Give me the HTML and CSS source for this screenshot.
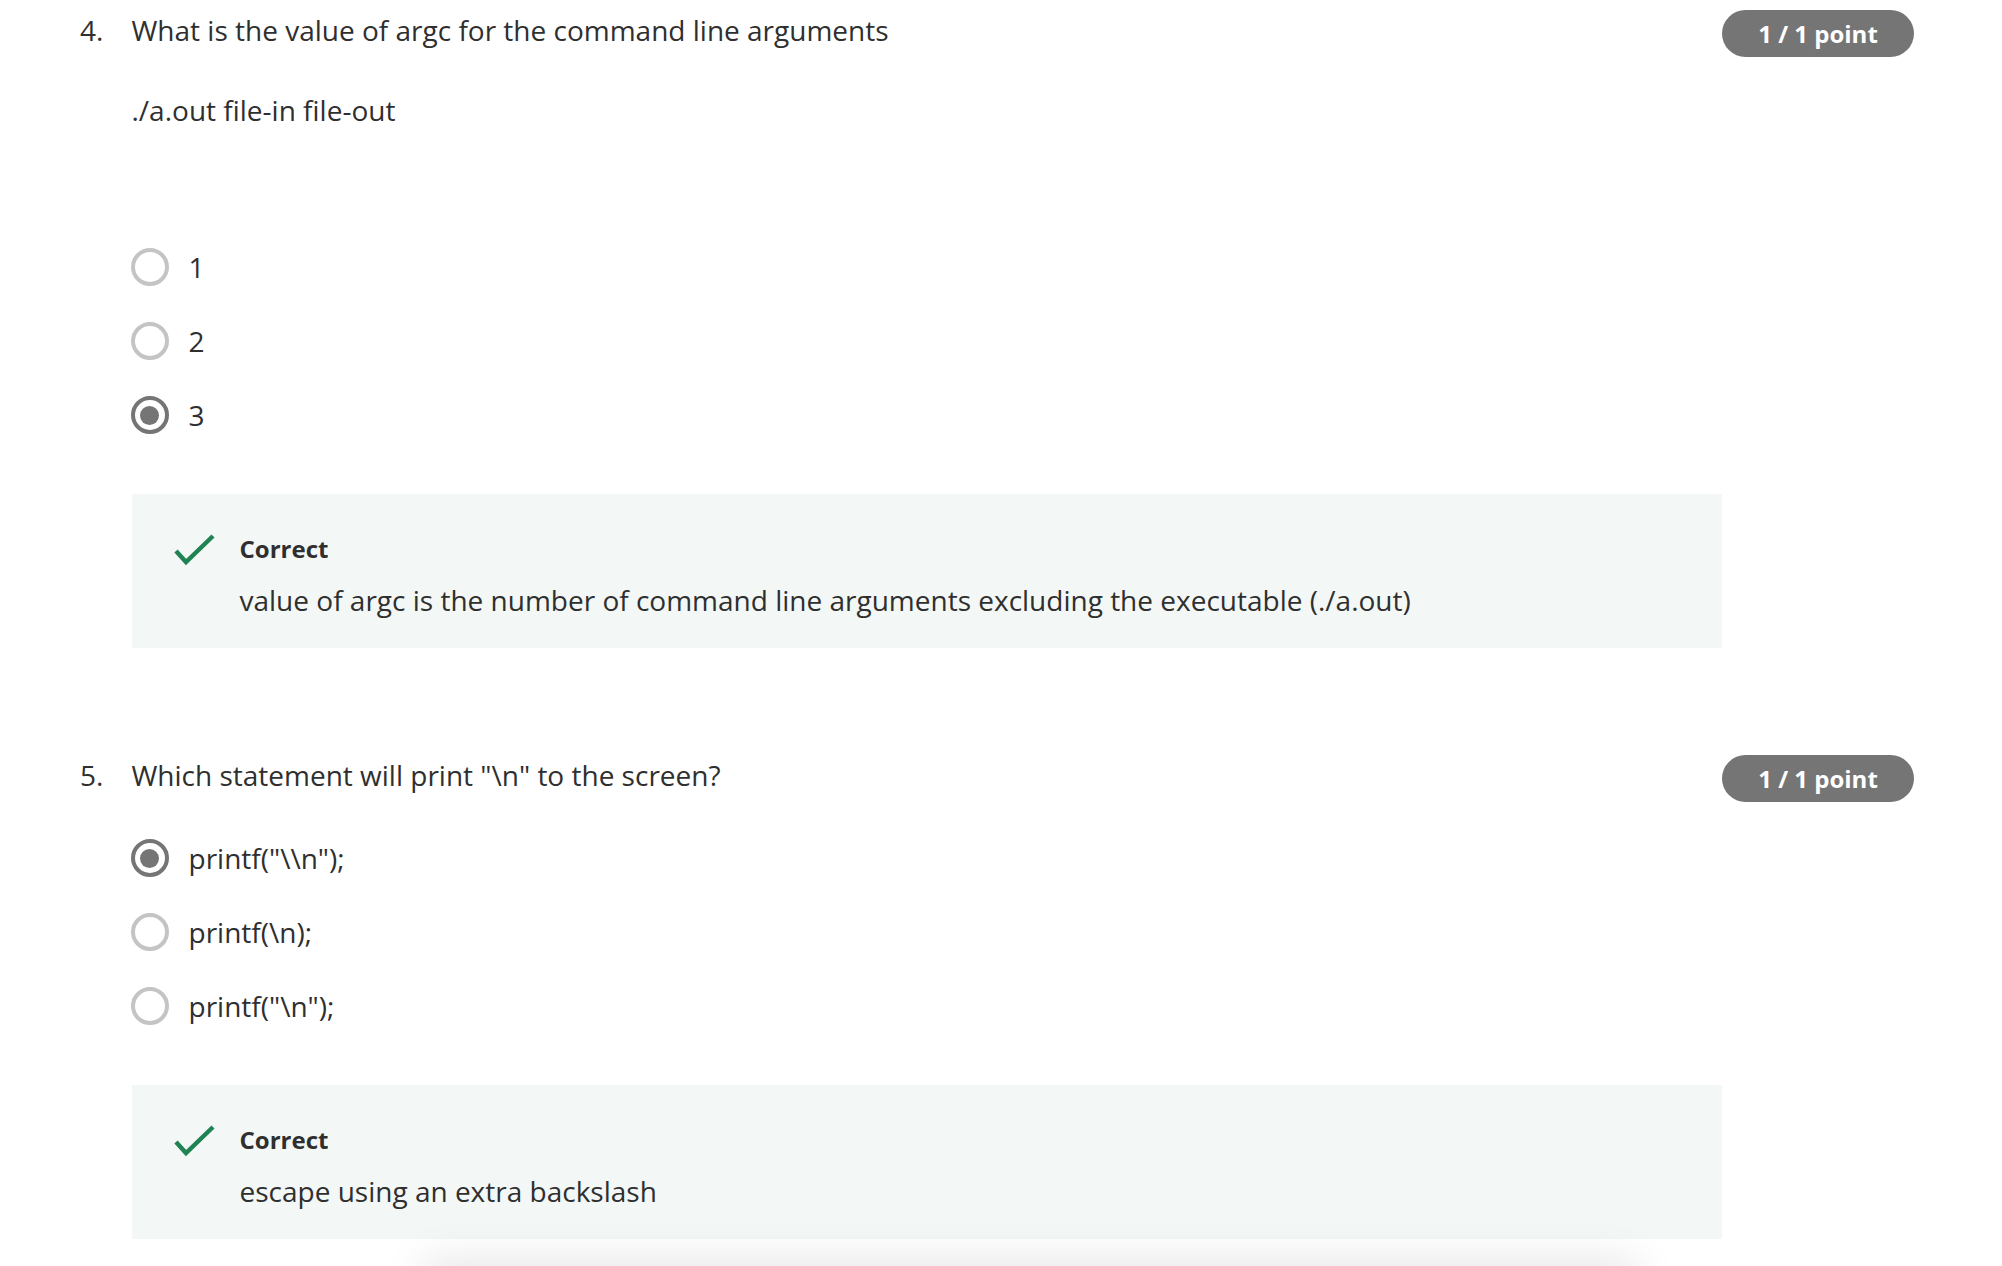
FILE: index.html
```html
<!DOCTYPE html>
<html lang="en">
<head>
<meta charset="utf-8">
<title>Quiz</title>
<link rel="stylesheet" href="styles.css">
</head>
<body>
<main class="quiz">
  <section class="question">
    <div class="q-num">4.</div>
    <div class="q-body">
      <div class="q-title">What is the value of argc for the command line arguments</div>
      <div class="q-prompt">./a.out file-in file-out</div>
      <ul class="options">
        <li class="option"><span class="radio"></span><span class="opt-label">1</span></li>
        <li class="option"><span class="radio"></span><span class="opt-label">2</span></li>
        <li class="option"><span class="radio checked"></span><span class="opt-label">3</span></li>
      </ul>
      <div class="feedback">
        <svg class="check" viewBox="0 0 42 32" width="42" height="32"><polyline points="2,17 12,28 39,2" fill="none" stroke="#1f8354" stroke-width="4.4"/></svg>
        <div class="fb-text">
          <div class="fb-head">Correct</div>
          <div class="fb-body">value of argc is the number of command line arguments excluding the executable (./a.out)</div>
        </div>
      </div>
    </div>
    <div class="badge">1 / 1 point</div>
  </section>

  <section class="question">
    <div class="q-num">5.</div>
    <div class="q-body">
      <div class="q-title">Which statement will print "\n" to the screen?</div>
      <ul class="options">
        <li class="option"><span class="radio checked"></span><span class="opt-label">printf("\\n");</span></li>
        <li class="option"><span class="radio"></span><span class="opt-label">printf(\n);</span></li>
        <li class="option"><span class="radio"></span><span class="opt-label">printf("\n");</span></li>
      </ul>
      <div class="feedback">
        <svg class="check" viewBox="0 0 42 32" width="42" height="32"><polyline points="2,17 12,28 39,2" fill="none" stroke="#1f8354" stroke-width="4.4"/></svg>
        <div class="fb-text">
          <div class="fb-head">Correct</div>
          <div class="fb-body">escape using an extra backslash</div>
        </div>
      </div>
    </div>
    <div class="badge">1 / 1 point</div>
  </section>
</main>
<div class="footer-shadow"></div>
</body>
</html>
```
FILE: styles.css
```css
html, body {
  margin: 0;
  padding: 0;
  background: #ffffff;
  overflow: hidden;
}
body {
  font-family: "Open Sans", "Noto Sans", sans-serif;
  color: #2f2f2f;
  font-size: 28px;
  line-height: 40px;
  height: 1266px;
  position: relative;
}
.quiz {
  padding: 10px 88px 0 80px;
}
.question {
  display: grid;
  grid-template-columns: 51.5px 1fr 192px;
  align-items: start;
  margin-bottom: 107px;
}
.q-num {
  line-height: 40px;
}
.q-body {
  display: flex;
  flex-direction: column;
}
.q-title {
  line-height: 40px;
}
.q-prompt {
  margin-top: 40px;
  margin-bottom: 74px;
}
.options {
  list-style: none;
  margin: 43px 0 0 0;
  padding: 0;
  display: flex;
  flex-direction: column;
  gap: 34px;
}
.option {
  display: flex;
  align-items: center;
  gap: 20px;
  height: 40px;
}
.radio {
  width: 38px;
  height: 38px;
  box-sizing: border-box;
  border: 4px solid #c4c4c4;
  border-radius: 50%;
  display: flex;
  align-items: center;
  justify-content: center;
  margin-left: -1px;
}
.radio.checked {
  border-color: #757575;
}
.radio.checked::after {
  content: "";
  width: 19px;
  height: 19px;
  border-radius: 50%;
  background: #757575;
}
.feedback {
  margin-top: 59px;
  background: #f3f8f6;
  display: flex;
  align-items: flex-start;
  padding: 37px 0 28px 42px;
  gap: 24px;
}
.check {
  margin-top: 3px;
  flex: none;
}
.fb-head {
  font-weight: 700;
  font-size: 24px;
  line-height: 36px;
}
.fb-body {
  margin-top: 13px;
  line-height: 40px;
}
.badge {
  background: #757575;
  color: #ffffff;
  font-weight: 700;
  font-size: 24px;
  line-height: 47px;
  height: 47px;
  border-radius: 24px;
  text-align: center;
}
.footer-shadow {
  position: absolute;
  left: 420px;
  width: 1220px;
  bottom: -40px;
  height: 40px;
  background: #fff;
  border-radius: 12px;
  box-shadow: 0 -6px 40px rgba(0, 0, 0, 0.10);
}
```
